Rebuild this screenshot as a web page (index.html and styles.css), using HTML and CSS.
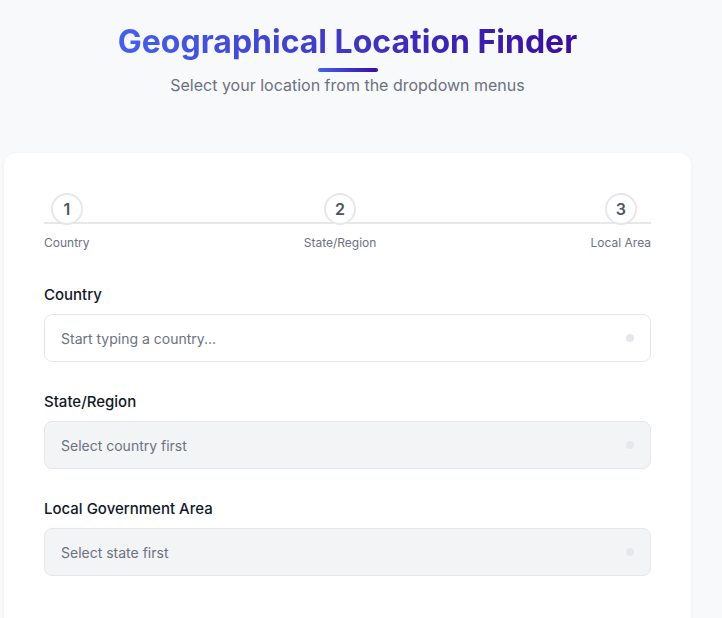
FILE: index.html
```html
<!DOCTYPE html>
<html lang="en">
<head>
<meta charset="utf-8">
<title>Geographical Location Finder</title>
<link rel="stylesheet" href="styles.css">
</head>
<body>
<div class="page">
  <header class="header">
    <h1 class="title">Geographical Location Finder</h1>
    <div class="title-bar"></div>
    <p class="subtitle">Select your location from the dropdown menus</p>
  </header>
  <main class="card">
    <div class="steps">
      <div class="step">
        <div class="step-circle">1</div>
        <div class="step-label">Country</div>
      </div>
      <div class="step">
        <div class="step-circle">2</div>
        <div class="step-label">State/Region</div>
      </div>
      <div class="step">
        <div class="step-circle">3</div>
        <div class="step-label">Local Area</div>
      </div>
    </div>
    <div class="field">
      <label class="field-label">Country</label>
      <div class="input">
        <span class="placeholder">Start typing a country...</span>
        <span class="dot"></span>
      </div>
    </div>
    <div class="field">
      <label class="field-label">State/Region</label>
      <div class="input disabled">
        <span class="placeholder">Select country first</span>
        <span class="dot"></span>
      </div>
    </div>
    <div class="field">
      <label class="field-label">Local Government Area</label>
      <div class="input disabled">
        <span class="placeholder">Select state first</span>
        <span class="dot"></span>
      </div>
    </div>
  </main>
</div>
</body>
</html>
```
FILE: styles.css
```css
* { box-sizing: border-box; }
html, body { margin: 0; padding: 0; }
body {
  background: #f8f9fb;
  font-family: Inter, "Noto Sans", sans-serif;
  color: #111827;
}
.page {
  width: 687px;
  margin-left: 4px;
  padding-top: 22px;
}
.header {
  display: flex;
  flex-direction: column;
  align-items: center;
}
.title {
  margin: 0;
  font-size: 32px;
  font-weight: 700;
  line-height: 40px;
  background: linear-gradient(90deg, #4361ee, #3a0ca3);
  -webkit-background-clip: text;
  background-clip: text;
  color: transparent;
}
.title-bar {
  width: 60px;
  height: 4px;
  border-radius: 2px;
  margin-top: 6px;
  background: linear-gradient(90deg, #4361ee, #3a0ca3);
}
.subtitle {
  margin: 1px 0 0;
  font-size: 16px;
  line-height: 24px;
  color: #6b7280;
}
.card {
  margin-top: 56px;
  background: #ffffff;
  border-radius: 12px;
  box-shadow: 0 1px 4px rgba(0, 0, 0, 0.05);
  padding: 40px 40px 60px;
}
.steps {
  position: relative;
  display: flex;
  justify-content: space-between;
  margin-bottom: 34px;
}
.steps::before {
  content: "";
  position: absolute;
  left: 0;
  right: 0;
  top: 29px;
  height: 2px;
  background: #e5e7eb;
}
.step {
  position: relative;
  display: flex;
  flex-direction: column;
  align-items: center;
}
.step-circle {
  width: 32px;
  height: 32px;
  border-radius: 50%;
  border: 2px solid #e5e7eb;
  background: #ffffff;
  display: flex;
  align-items: center;
  justify-content: center;
  font-size: 16px;
  font-weight: 600;
  color: #4b5563;
}
.step-label {
  margin-top: 10px;
  font-size: 12px;
  line-height: 16px;
  color: #6b7280;
}
.field {
  display: flex;
  flex-direction: column;
  margin-bottom: 30px;
}
.field-label {
  font-size: 15px;
  font-weight: 500;
  line-height: 20px;
  color: #111827;
  margin-bottom: 9px;
}
.input {
  height: 48px;
  border: 1px solid #e5e7eb;
  border-radius: 8px;
  background: #ffffff;
  display: flex;
  align-items: center;
  justify-content: space-between;
  padding: 0 16px 0 16px;
}
.input.disabled {
  background: #f3f4f6;
}
.placeholder {
  font-size: 14px;
  color: #6b7280;
}
.dot {
  width: 8px;
  height: 8px;
  border-radius: 50%;
  background: #e5e7eb;
}
```
